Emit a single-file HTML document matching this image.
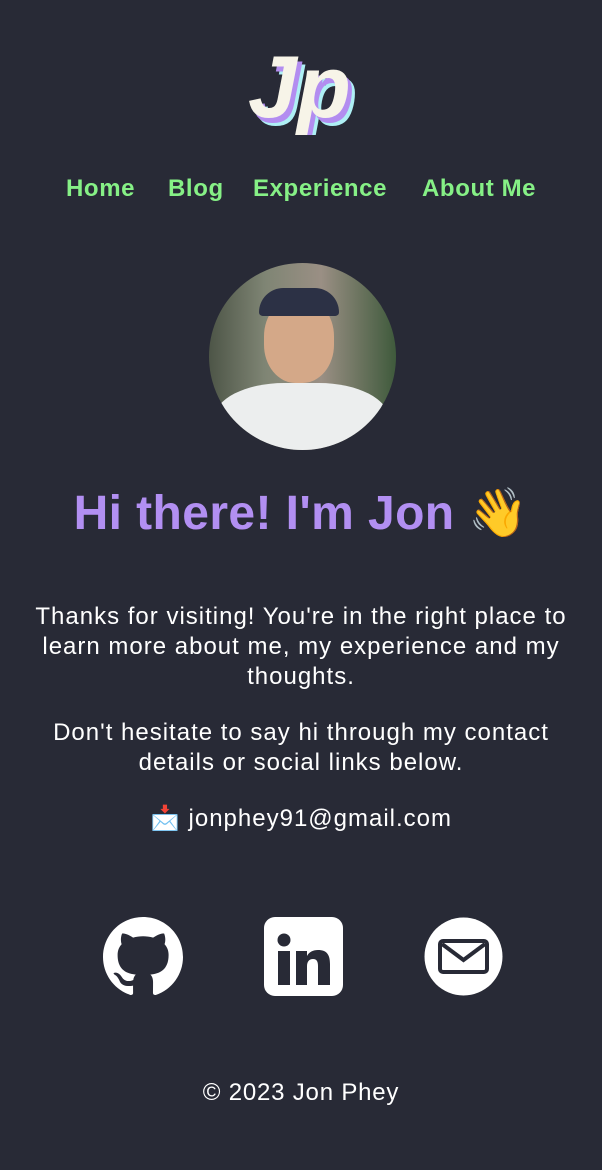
<!DOCTYPE html><html><head><style>
body{margin:0;background:#282a36;width:602px;height:1170px;font-family:"Liberation Sans",sans-serif;color:#fff;position:relative;overflow:hidden}
.a{position:absolute;left:0;width:602px;text-align:center}
nav span{position:absolute;top:175px;font-weight:bold;font-size:24px;color:#86f086;letter-spacing:0.6px}
p{margin:0}
</style></head><body>
<svg style="position:absolute;left:245px;top:45px" width="115" height="90" viewBox="0 0 115 90">
<g font-family="Liberation Sans" font-weight="bold" font-style="italic" font-size="88">
<text x="10" y="80" fill="#aef0f5">Jp</text>
<text x="7" y="77" fill="#b38df0">Jp</text>
<text x="3" y="72" fill="#f7f4e8">Jp</text></g></svg>
<nav><span style="left:66px">Home</span><span style="left:168px">Blog</span><span style="left:253px">Experience</span><span style="left:422px">About Me</span></nav>
<div style="position:absolute;left:209px;top:263px;width:187px;height:187px;border-radius:50%;overflow:hidden;background:linear-gradient(90deg,#4d5547,#7f8574 30%,#9a8f84 60%,#3f5a3c)">
<div style="position:absolute;left:55px;top:35px;width:70px;height:85px;border-radius:45%;background:#d4a888"></div>
<div style="position:absolute;left:50px;top:25px;width:80px;height:28px;border-radius:40px 40px 6px 6px;background:#2c3145"></div>
<div style="position:absolute;left:5px;top:120px;width:175px;height:90px;border-radius:40% 40% 0 0;background:#eceeee"></div></div>
<div class="a" style="top:484px;font-size:48px;font-weight:bold;color:#b28ff2;letter-spacing:0.4px">Hi there! I'm Jon 👋</div>
<div class="a" style="top:602px;font-size:24px;line-height:30px;padding:0 25px;box-sizing:border-box;letter-spacing:1px">
<p>Thanks for visiting! You're in the right place to learn more about me, my experience and my thoughts.</p>
<p style="margin-top:26px">Don't hesitate to say hi through my contact details or social links below.</p>
<p style="margin-top:26px">📩 jonphey91@gmail.com</p></div>
<svg style="position:absolute;left:103px;top:917px" width="80" height="80" viewBox="0 0 16 16"><path fill="#fff" d="M8 0C3.580 0 0 3.58 0 8c0 3.54 2.29 6.530 5.47 7.59.4.07.55-.17.55-.38 0-.19-.01-.82-.01-1.490-2.01.37-2.530-.49-2.690-.94-.09-.23-.48-.94-.82-1.130-.28-.15-.68-.52-.01-.53.63-.01 1.080.58 1.230.82.72 1.21 1.870.87 2.330.66.07-.52.28-.87.51-1.07-1.78-.2-3.64-.89-3.64-3.95 0-.87.31-1.59.82-2.15-.08-.2-.36-1.02.08-2.12 0 0 .67-.21 2.2.82.64-.18 1.32-.27 2-.27.68 0 1.36.09 2 .27 1.53-1.04 2.2-.82 2.2-.82.44 1.1.16 1.92.08 2.12.51.56.82 1.27.82 2.15 0 3.07-1.87 3.75-3.65 3.950.29.25.54.73.54 1.48 0 1.07-.01 1.93-.01 2.2 0 .21.15.46.55.38A8.013 8.013 0 0016 8c0-4.42-3.58-8-8-8z"/></svg>
<svg style="position:absolute;left:264px;top:917px" width="79" height="79" viewBox="0 0 79 79"><rect width="79" height="79" rx="11" fill="#fff"/><circle cx="20" cy="23" r="6.5" fill="#282a36"/><rect x="14" y="34" width="12" height="34" fill="#282a36"/><path fill="#282a36" d="M32 34h11v5c2-4 6-6 11-6 9 0 12 5 12 14v21H54V49c0-4-1-7-5-7s-6 3-6 7v19H32z"/></svg>
<svg style="position:absolute;left:424px;top:917px" width="79" height="79" viewBox="0 0 79 79"><circle cx="39.5" cy="39.5" r="39" fill="#fff"/><rect x="16" y="24" width="47" height="31" rx="3" fill="none" stroke="#282a36" stroke-width="4"/><path d="M18 27l21.5 16L61 27" fill="none" stroke="#282a36" stroke-width="4"/></svg>
<div class="a" style="top:1079px;font-size:24px;letter-spacing:0.8px">© 2023 Jon Phey</div>
</body></html>
